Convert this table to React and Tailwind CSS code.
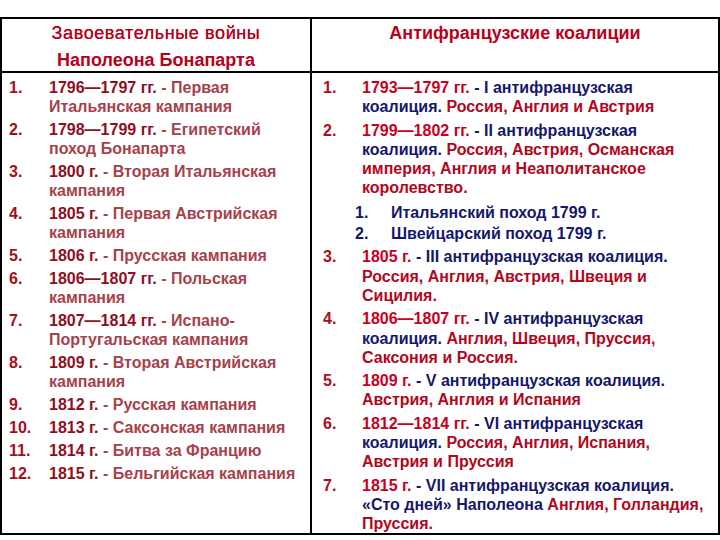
import React from 'react';

const WARS = [
  { n: '1.', lines: [['1796—1797 гг.', ' - Первая'], ['', 'Итальянская кампания']] },
  { n: '2.', lines: [['1798—1799 гг.', ' - Египетский'], ['', 'поход Бонапарта']] },
  { n: '3.', lines: [['1800 г.', ' - Вторая Итальянская'], ['', 'кампания']] },
  { n: '4.', lines: [['1805 г.', ' - Первая Австрийская'], ['', 'кампания']] },
  { n: '5.', lines: [['1806 г.', ' - Прусская кампания']] },
  { n: '6.', lines: [['1806—1807 гг.', ' - Польская'], ['', 'кампания']] },
  { n: '7.', lines: [['1807—1814 гг.', ' - Испано-'], ['', 'Португальская кампания']] },
  { n: '8.', lines: [['1809 г.', ' - Вторая Австрийская'], ['', 'кампания']] },
  { n: '9.', lines: [['1812 г.', ' - Русская кампания']] },
  { n: '10.', lines: [['1813 г.', ' - Саксонская кампания']] },
  { n: '11.', lines: [['1814 г.', ' - Битва за Францию']] },
  { n: '12.', lines: [['1815 г.', ' - Бельгийская кампания']] },
];

// each line: array of [type, text]; y = year (red), b = blue, c = country (dark red)
const COALITIONS = [
  {
    n: '1.',
    lines: [
      [['y', '1793—1797 гг.'], ['b', ' - I антифранцузская']],
      [['b', 'коалиция. '], ['c', 'Россия, Англия и Австрия']],
    ],
  },
  {
    n: '2.',
    lines: [
      [['y', '1799—1802 гг.'], ['b', ' - II антифранцузская']],
      [['b', 'коалиция. '], ['c', 'Россия, Австрия, Османская']],
      [['c', 'империя, Англия и Неаполитанское']],
      [['c', 'королевство.']],
    ],
    subs: ['Итальянский поход 1799 г.', 'Швейцарский поход 1799 г.'],
  },
  {
    n: '3.',
    lines: [
      [['y', '1805 г.'], ['b', ' - III антифранцузская коалиция.']],
      [['c', 'Россия, Англия, Австрия, Швеция и']],
      [['c', 'Сицилия.']],
    ],
  },
  {
    n: '4.',
    lines: [
      [['y', '1806—1807 гг.'], ['b', ' - IV антифранцузская']],
      [['b', 'коалиция. '], ['c', 'Англия, Швеция, Пруссия,']],
      [['c', 'Саксония и Россия.']],
    ],
  },
  {
    n: '5.',
    lines: [
      [['y', '1809 г.'], ['b', ' - V антифранцузская коалиция.']],
      [['c', 'Австрия, Англия и Испания']],
    ],
  },
  {
    n: '6.',
    lines: [
      [['y', '1812—1814 гг.'], ['b', ' - VI антифранцузская']],
      [['b', 'коалиция. '], ['c', 'Россия, Англия, Испания,']],
      [['c', 'Австрия и Пруссия']],
    ],
  },
  {
    n: '7.',
    lines: [
      [['y', '1815 г.'], ['b', ' - VII антифранцузская коалиция.']],
      [['b', '«Сто дней» Наполеона '], ['c', 'Англия, Голландия,']],
      [['c', 'Пруссия.']],
    ],
  },
];

const tone = {
  y: 'text-[#c8001e]',
  b: 'text-[#15176a]',
  c: 'text-[#b1071d]',
};

const App = () => {
  return (
    <div className="w-[720px] h-[540px] bg-white pt-[17px] font-['Liberation_Sans',Arial,sans-serif] font-bold">
      <div className="w-[720px] h-[518px] border-2 border-black grid grid-cols-[310px_1fr] grid-rows-[54px_1fr]">
        {/* Header */}
        <div className="border-r-2 border-b-2 border-black text-center text-[18px] leading-[27px] text-[#b8001c] pt-[1px]">
          <div className="font-normal tracking-[0.6px] [text-shadow:0_0_0.5px_#b8001c]">Завоевательные войны</div>
          <div>Наполеона Бонапарта</div>
        </div>
        <div className="border-b-2 border-black text-center text-[18px] leading-[27px] text-[#b8001c] pt-[1px]">
          Антифранцузские коалиции
        </div>

        {/* Left column */}
        <div className="border-r-2 border-black pt-[5px] text-[16px] leading-[19px] flex flex-col gap-[4px]">
          {WARS.map((w) => (
            <div key={w.n} className="flex">
              <div className="w-[47px] pl-[7px] shrink-0 text-[#a0101f]">{w.n}</div>
              <div>
                {w.lines.map((l, i) => (
                  <div key={i} className="whitespace-pre">
                    {l[0] && <span className="text-[#8e0f22]">{l[0]}</span>}
                    <span className="text-[#a5424c]">{l[1]}</span>
                  </div>
                ))}
              </div>
            </div>
          ))}
        </div>

        {/* Right column */}
        <div className="pt-[5px] text-[16px] leading-[19.3px] flex flex-col gap-[4px]">
          {COALITIONS.map((c) => (
            <div key={c.n}>
              <div className="flex">
                <div className="w-[50px] pl-[11px] shrink-0 text-[#a8101f]">{c.n}</div>
                <div>
                  {c.lines.map((l, i) => (
                    <div key={i} className="whitespace-pre">
                      {l.map(([t, s], j) => (
                        <span key={j} className={tone[t]}>
                          {s}
                        </span>
                      ))}
                    </div>
                  ))}
                </div>
              </div>
              {c.subs && (
                <div className="flex flex-col gap-[2px] mt-[5px] text-[#15176a]">
                  {c.subs.map((s, i) => (
                    <div key={i} className="flex">
                      <div className="w-[79px] pl-[43px] shrink-0">{i + 1}.</div>
                      <div>{s}</div>
                    </div>
                  ))}
                </div>
              )}
            </div>
          ))}
        </div>
      </div>
    </div>
  );
};

export default App;
